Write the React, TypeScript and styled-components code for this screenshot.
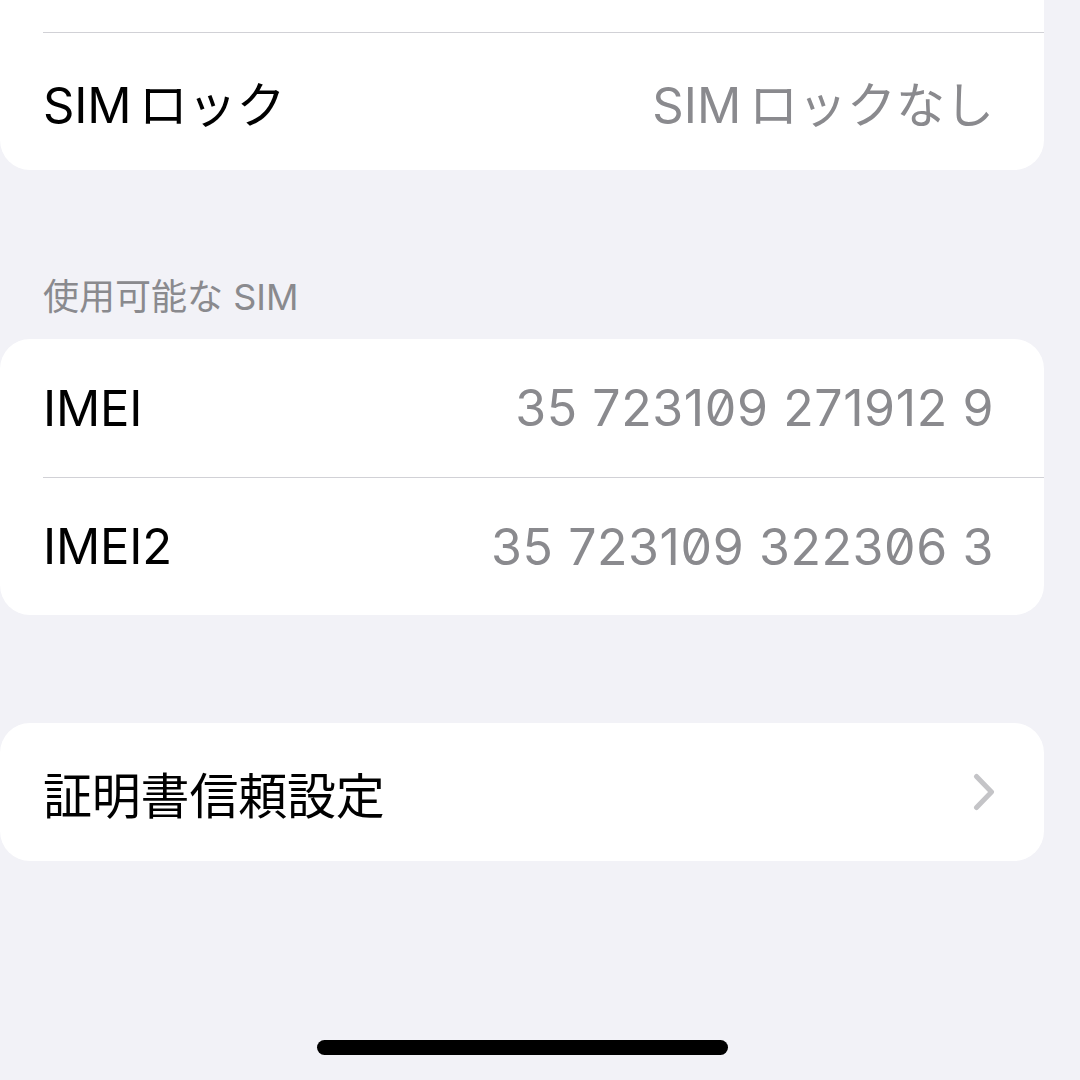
import React from "react";
import styled, { createGlobalStyle } from "styled-components";

const GlobalStyle = createGlobalStyle`
  html, body {
    margin: 0;
    padding: 0;
    background: #f2f2f7;
  }
  body {
    font-family: Inter, "Noto Sans CJK JP", "Noto Sans", sans-serif;
    -webkit-font-smoothing: antialiased;
  }
`;

const Screen = styled.div`
  width: 1080px;
  height: 1080px;
  overflow: hidden;
  background: #f2f2f7;
  display: flex;
  flex-direction: column;
  box-sizing: border-box;
  padding-right: 36px;
`;

const Card = styled.section<{ $offsetTop?: number; $gapTop?: number }>`
  background: #ffffff;
  border-radius: 30px;
  overflow: hidden;
  margin-top: ${(p) => (p.$offsetTop !== undefined ? p.$offsetTop : p.$gapTop ?? 0)}px;
  flex-shrink: 0;
`;

const Row = styled.div`
  padding-left: 43px;
`;

const RowInner = styled.div<{ $divider?: boolean }>`
  height: 138px;
  box-sizing: border-box;
  display: flex;
  align-items: center;
  justify-content: space-between;
  padding-right: 50px;
  border-top: ${(p) => (p.$divider ? "1.5px solid #d1d1d6" : "none")};
`;

const Label = styled.span`
  font-size: 49px;
  color: #000000;
  letter-spacing: -0.2px;
  word-spacing: -6px;
  white-space: nowrap;
`;

const Value = styled.span<{ $numeric?: boolean }>`
  font-size: ${(p) => (p.$numeric ? 50 : 49)}px;
  color: #8a8a8e;
  white-space: nowrap;
  font-feature-settings: ${(p) => (p.$numeric ? '"zero" 1' : "normal")};
  letter-spacing: ${(p) => (p.$numeric ? "0.6px" : "0")};
  word-spacing: ${(p) => (p.$numeric ? "0" : "-6px")};
`;

const SectionHeader = styled.h2`
  margin: 107px 0 22px 0;
  padding-left: 43px;
  font-size: 36px;
  line-height: 40px;
  font-weight: 400;
  color: #8a8a8e;
  white-space: nowrap;
`;

const Chevron = styled.svg`
  width: 22px;
  height: 38px;
  display: block;
  margin-right: -1px;
`;

const Footer = styled.div`
  margin-top: auto;
  padding-bottom: 25px;
  display: flex;
  justify-content: center;
`;

const HomeIndicator = styled.div`
  width: 411px;
  height: 15px;
  border-radius: 8px;
  background: #000000;
`;

type Item = { label: string; value?: string; numeric?: boolean; chevron?: boolean };

const ListRow: React.FC<{ item: Item; divider?: boolean }> = ({ item, divider }) => (
  <Row>
    <RowInner $divider={divider}>
      <Label>{item.label}</Label>
      {item.value !== undefined && <Value $numeric={item.numeric}>{item.value}</Value>}
      {item.chevron && (
        <Chevron viewBox="0 0 22 38" aria-hidden="true">
          <polyline
            points="3.5,3.5 18.5,19 3.5,34.5"
            fill="none"
            stroke="#c4c4c7"
            strokeWidth="5"
            strokeLinecap="round"
            strokeLinejoin="round"
          />
        </Chevron>
      )}
    </RowInner>
  </Row>
);

const Group: React.FC<{ items: Item[]; offsetTop?: number; gapTop?: number }> = ({
  items,
  offsetTop,
  gapTop,
}) => (
  <Card $offsetTop={offsetTop} $gapTop={gapTop}>
    {items.map((item, i) => (
      <ListRow key={i} item={item} divider={i > 0} />
    ))}
  </Card>
);

export default function App() {
  return (
    <>
      <GlobalStyle />
      <Screen>
        <Group
          offsetTop={-106}
          items={[
            { label: "" },
            { label: "SIM ロック", value: "SIM ロックなし" },
          ]}
        />
        <SectionHeader>使用可能な SIM</SectionHeader>
        <Group
          items={[
            { label: "IMEI", value: "35 723109 271912 9", numeric: true },
            { label: "IMEI2", value: "35 723109 322306 3", numeric: true },
          ]}
        />
        <Group gapTop={108} items={[{ label: "証明書信頼設定", chevron: true }]} />
        <Footer>
          <HomeIndicator />
        </Footer>
      </Screen>
    </>
  );
}
